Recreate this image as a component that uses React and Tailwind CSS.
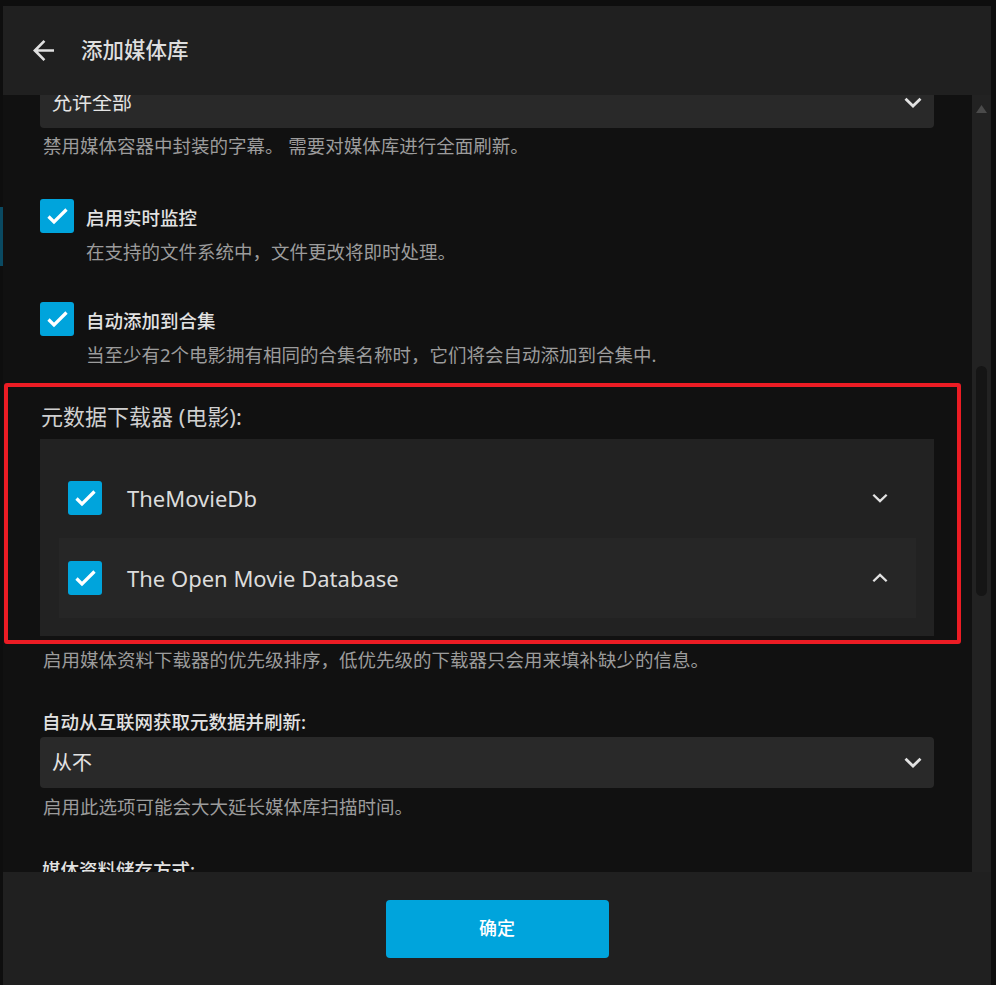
import React from 'react';

function Check() {
  return (
    <div className="w-[34px] h-[34px] rounded-[3px] bg-[#00a4dc] flex items-center justify-center shrink-0">
      <svg width="34" height="34" viewBox="0 0 34 34" fill="none">
        <path d="M8.5 17.5l5.5 5.5L26.5 10.5" stroke="#fff" strokeWidth="3.2" strokeLinecap="butt" strokeLinejoin="miter" />
      </svg>
    </div>
  );
}

function Chevron({ up = false, w = 18, h = 11, sw = 2.8 }) {
  return (
    <svg width={w} height={h} viewBox="0 0 18 11" fill="none" className={up ? 'rotate-180' : ''}>
      <path d="M1.5 1.8l7.5 7.2 7.5-7.2" stroke="#e2e2e2" strokeWidth={sw} />
    </svg>
  );
}

function Select({ value }) {
  return (
    <div className="h-[51px] rounded-[4px] bg-[#292929] flex items-center justify-between px-[12px]">
      <span className="text-[20px] text-[#e4e4e4] leading-none">{value}</span>
      <Chevron />
    </div>
  );
}

function Helper({ children, className = '' }) {
  return <p className={`text-[18.5px] leading-[24px] text-[#9c9c9c] pl-[3px] ${className}`}>{children}</p>;
}

function CheckRow({ label, desc, className = '' }) {
  return (
    <div className={`flex gap-[12px] ${className}`}>
      <Check />
      <div className="pt-[7px]">
        <p className="text-[18.5px] leading-[24px] text-[#e2e2e2] font-medium">{label}</p>
        <p className="mt-[10px] text-[18.5px] leading-[24px] text-[#9c9c9c]">{desc}</p>
      </div>
    </div>
  );
}

function Fetcher({ name, open = false }) {
  return (
    <div className={`h-[80px] flex items-center pl-[9px] pr-[20px] ${open ? 'bg-[#262626]' : ''}`}>
      <Check />
      <span className="ml-[25px] text-[22px] text-[#dcdcdc] flex-1">{name}</span>
      <div className="w-[32px] flex justify-center">
        <Chevron up={open} w={16} h={10} sw={2.6} />
      </div>
    </div>
  );
}

export default function App() {
  return (
    <div className="relative w-[996px] h-[985px] bg-[#0e0e0e] flex font-['Noto_Sans','Noto_Sans_CJK_SC',sans-serif] overflow-hidden">
      <div className="w-[3px] shrink-0">
        <div className="mt-[207px] h-[59px] bg-[#0a4a62]" />
      </div>

      <div className="mt-[6px] w-[988px] h-[979px] flex flex-col bg-[#202020]">
        <div className="h-[89px] flex items-center shrink-0">
          <svg width="21" height="21" viewBox="4 4 16 16" className="ml-[30px]">
            <path d="M20 11H7.83l5.59-5.59L12 4l-8 8 8 8 1.41-1.41L7.83 13H20v-2z" fill="#e0e0e0" />
          </svg>
          <h1 className="ml-[27px] text-[21.5px] text-[#dedede] font-medium">添加媒体库</h1>
        </div>

        <div className="flex h-[777px] shrink-0">
          <div className="w-[969px] bg-[#111111] overflow-hidden pl-[37px] pr-[38px]">
            <div className="-mt-[18px]">
              <Select value="允许全部" />
              <Helper className="mt-[6px]">禁用媒体容器中封装的字幕。 需要对媒体库进行全面刷新。</Helper>

              <CheckRow className="mt-[41px]" label="启用实时监控" desc="在支持的文件系统中，文件更改将即时处理。" />
              <CheckRow className="mt-[38px]" label="自动添加到合集" desc="当至少有2个电影拥有相同的合集名称时，它们将会自动添加到合集中." />

              <h3 className="mt-[35px] text-[22px] leading-[28px] text-[#cfcfcf] pl-[1px]">元数据下载器 (电影):</h3>
              <div className="mt-[9px] bg-[#222222] pt-[19px] pb-[18px] pl-[19px] pr-[18px]">
                <Fetcher name="TheMovieDb" />
                <Fetcher name="The Open Movie Database" open />
              </div>
              <Helper className="mt-[12px]">启用媒体资料下载器的优先级排序，低优先级的下载器只会用来填补缺少的信息。</Helper>

              <p className="mt-[38px] text-[18.5px] leading-[24px] text-[#e2e2e2] font-medium pl-[2px]">自动从互联网获取元数据并刷新:</p>
              <div className="mt-[3px]">
                <Select value="从不" />
              </div>
              <Helper className="mt-[7px]">启用此选项可能会大大延长媒体库扫描时间。</Helper>

              <p className="mt-[39px] text-[18.5px] leading-[24px] text-[#e2e2e2] font-medium pl-[2px]">媒体资料储存方式:</p>
            </div>
          </div>

          <div className="w-[19px] bg-[#222222] flex flex-col items-center">
            <svg width="11" height="8" viewBox="0 0 11 8" className="mt-[10px]">
              <path d="M5.5 0L11 8H0z" fill="#4a4a4a" />
            </svg>
            <div className="mt-[253px] w-[11px] h-[230px] rounded-full bg-[#151515]" />
          </div>
        </div>

        <div className="flex-1 flex items-center justify-center">
          <button className="w-[223px] h-[58px] rounded-[4px] bg-[#00a4dc] text-white text-[18px] font-medium">确定</button>
        </div>
      </div>

      <div className="absolute left-[4px] top-[383px] w-[957px] h-[261px] border-[4px] border-[#ec1c24] rounded-[3px] pointer-events-none" />
    </div>
  );
}
